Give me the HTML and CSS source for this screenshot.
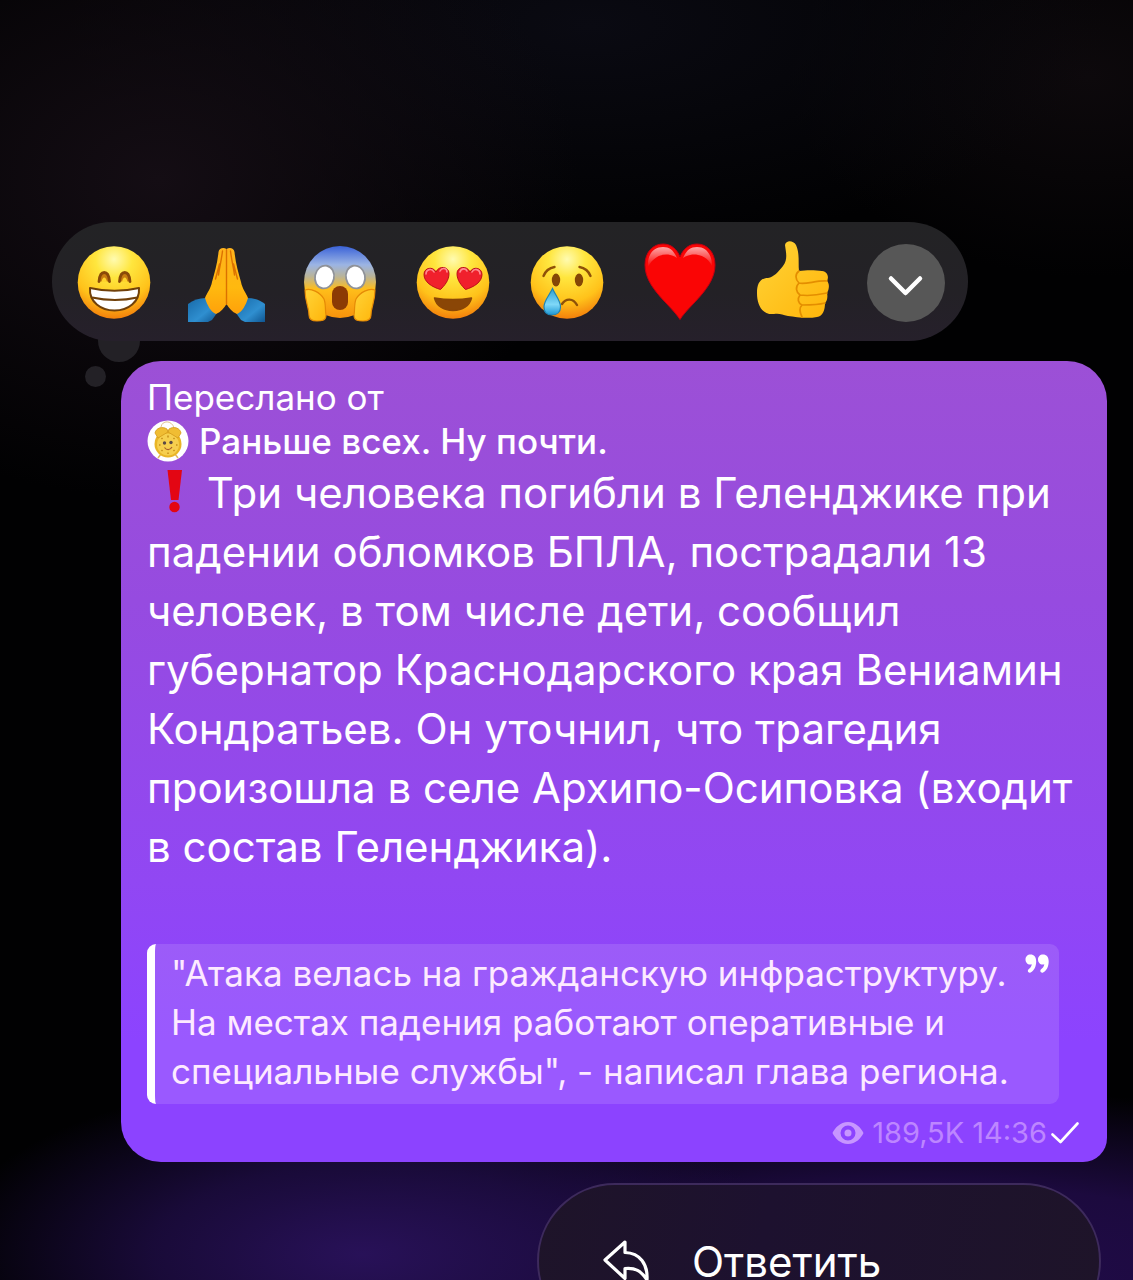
FILE: index.html
```html
<!DOCTYPE html>
<html lang="ru">
<head>
<meta charset="utf-8">
<meta name="viewport" content="width=device-width, initial-scale=1">
<title>Сообщение</title>
<link rel="stylesheet" href="styles.css">
</head>
<body>
<svg class="defs" aria-hidden="true">
  <defs>
    <radialGradient id="face" cx=".5" cy=".18" r=".84">
      <stop offset="0" stop-color="#fffbb0"/><stop offset=".3" stop-color="#ffe63e"/><stop offset=".7" stop-color="#ffc21a"/><stop offset="1" stop-color="#f27a0a"/>
    </radialGradient>
    <linearGradient id="fear" x1="0" y1="0" x2="0" y2="1">
      <stop offset="0" stop-color="#3a62d8"/><stop offset=".26" stop-color="#9bb4e4"/><stop offset=".42" stop-color="#b9b49a"/><stop offset=".6" stop-color="#ffbe1a"/><stop offset="1" stop-color="#f7920c"/>
    </linearGradient>
    <linearGradient id="skin" x1="0" y1="0" x2="0" y2="1">
      <stop offset="0" stop-color="#ffb31c"/><stop offset=".6" stop-color="#ffb90f"/><stop offset="1" stop-color="#ffa10a"/>
    </linearGradient>
    <linearGradient id="palm" x1="0" y1="0" x2="1" y2="1">
      <stop offset="0" stop-color="#ffd438"/><stop offset="1" stop-color="#ffb50a"/>
    </linearGradient>
    <linearGradient id="sleeve" x1="0" y1="0" x2="1" y2="1">
      <stop offset="0" stop-color="#1769a8"/><stop offset=".6" stop-color="#2f8fd0"/><stop offset="1" stop-color="#0f5590"/>
    </linearGradient>
    <linearGradient id="tear" x1="0" y1="0" x2="0" y2="1">
      <stop offset="0" stop-color="#2f9fd0"/><stop offset=".6" stop-color="#7fd8f8"/><stop offset="1" stop-color="#1c96d2"/>
    </linearGradient>
    <linearGradient id="gloss" x1="0" y1="0" x2="0" y2="1">
      <stop offset="0" stop-color="#fff" stop-opacity=".65"/><stop offset="1" stop-color="#fff" stop-opacity="0"/>
    </linearGradient>
  </defs>
</svg>
<main class="screen">
  <div class="reactions">
    <button class="reaction" type="button" aria-label="Улыбка">
      <svg viewBox="0 0 80 80"><circle cx="40" cy="39.500" r="36.300" fill="url(#face)"/>
        <path d="M25 38.500c1-12 9.500-12 10.500 0M45.500 38.500c1-12 9.500-12 10.500 0" fill="#c77c10" stroke="#8a4a08" stroke-width="2.800" stroke-linecap="round"/>
        <path d="M27.500 39c1-6 4.500-6 5.500 0zM48 39c1-6 4.500-6 5.500 0z" fill="#ffd42c"/>
        <path d="M16 45c15 3.500 34 3.500 49 0 1 14-11 22.500-24.500 22.500S15 59 16 45z" fill="#fff" stroke="#70400a" stroke-width="2" stroke-linejoin="round"/>
        <path d="M18 54.500c14 3 32 3 45.500 0" fill="none" stroke="#70400a" stroke-width="2"/>
      </svg>
    </button>
    <button class="reaction" type="button" aria-label="Сложенные руки">
      <svg viewBox="0 0 80 80">
        <path d="M1 61c5-4 11-6 18-6l11 15-5 7-4 2H1z" fill="url(#sleeve)"/><path d="M78 61c-5-4-11-6-18-6L49 70l5 7 4 2h20z" fill="url(#sleeve)"/>
        <path d="M39.500 6c-3-2-7.500-1-8 3-1 11-4 21-6.500 30-1 6-5 11-7 16 2 7 6 14 11 16 5-2 8-6 10.500-10z" fill="url(#skin)"/>
        <path d="M39.500 6c3-2 7.500-1 8 3 1 11 4 21 6.500 30 1 6 5 11 7 16-2 7-6 14-11 16-5-2-8-6-10.500-10z" fill="url(#skin)"/>
        <path d="M39.500 7v54M32.500 21l-4 15M35.500 8c-1 9-3 16-4 24M46.500 21l4 15M43.500 8c1 9 3 16 4 24" fill="none" stroke="#dc7100" stroke-width="1.400" stroke-linecap="round"/>
      </svg>
    </button>
    <button class="reaction" type="button" aria-label="Ужас">
      <svg viewBox="0 0 80 80"><circle cx="40" cy="39" r="36" fill="url(#fear)"/>
        <ellipse cx="24.500" cy="34" rx="9.500" ry="11.500" fill="#fff" stroke="#8f9299" stroke-width="1.800" transform="rotate(12 24.500 34)"/>
        <ellipse cx="55.500" cy="34" rx="9.500" ry="11.500" fill="#fff" stroke="#8f9299" stroke-width="1.800" transform="rotate(-12 55.500 34)"/>
        <rect x="32" y="43" width="16" height="24" rx="8" fill="#8c3a04"/>
        <path d="M5 47c6-2 15 2 19 9 2 5 1 11 2 16 0 6-5 6-9 6-6 0-8-2-8-6 0-8-4-13-4-25z" fill="url(#palm)" stroke="#e58a06" stroke-width="1.200"/>
        <path d="M75 47c-6-2-15 2-19 9-2 5-1 11-2 16 0 6 5 6 9 6 6 0 8-2 8-6 0-8 4-13 4-25z" fill="url(#palm)" stroke="#e58a06" stroke-width="1.200"/>
      </svg>
    </button>
    <button class="reaction" type="button" aria-label="Влюблённость">
      <svg viewBox="0 0 80 80"><circle cx="40" cy="39.500" r="36.300" fill="url(#face)"/>
        <path d="M27.500 46.500C19 44 11 39 11 31.500c0-7 9-8.500 12-2.500 3-7 13-5.500 13 1.500 0 7-4.500 12-8.500 16z" fill="#f0202c" stroke="#b90f18" stroke-width="1"/>
        <path d="M52.500 46.500C61 44 69 39 69 31.500c0-7-9-8.500-12-2.500-3-7-13-5.500-13 1.500 0 7 4.500 12 8.500 16z" fill="#f0202c" stroke="#b90f18" stroke-width="1"/>
        <path d="M13 31c0-5 6-6 8-2M27 28c2-4 7-3 7 1M47 29c1-4 6-4 7-1M59 29c2-4 8-3 8 2" fill="none" stroke="#ff8a90" stroke-width="1.600" stroke-linecap="round"/>
        <path d="M21.500 55c12 2 25 2 37 0-2 8-9 12.500-18.500 12.500S23.500 63 21.500 55z" fill="#8a4606" stroke="#8a4606" stroke-width="1.500" stroke-linejoin="round"/>
      </svg>
    </button>
    <button class="reaction" type="button" aria-label="Слеза">
      <svg viewBox="0 0 80 80"><circle cx="40" cy="39.500" r="36.300" fill="url(#face)"/>
        <path d="M16.500 33c2-5 5-8 11-9M63.500 33c-2-5-5-8-11-9M35 61c4-6 11-6 15 1" fill="none" stroke="#8f5108" stroke-width="2.400" stroke-linecap="round"/>
        <ellipse cx="29" cy="37" rx="4.200" ry="6.500" fill="#854706"/><ellipse cx="52" cy="37" rx="4.200" ry="6.500" fill="#854706"/>
        <path d="M25.500 45.500c3 7 8 12 8 18.500 0 5-3.500 8-8.500 8s-8-3-8-8c0-6.500 5-11 8.500-18.500z" fill="url(#tear)" stroke="#1f84b4" stroke-width="1.200"/>
      </svg>
    </button>
    <button class="reaction" type="button" aria-label="Сердце">
      <svg viewBox="0 0 80 80"><path d="M40 76.500C31 62 5 45 5 22 5 8 14 1 23 1c8 0 14 5 17 13C43 6 49 1 57 1c10 0 18 8 18 21 0 23-26 40-35 54.500z" fill="#fa0505" stroke="#c30010" stroke-width="1"/>
        <path d="M8 24C7 11 14 4 23 4c7 0 11 4 14 11-8-6-22-5-29 9zM43 15c3-7 7-11 14-11 9 0 15 7 15 19-6-13-21-14-29-8z" fill="url(#gloss)"/>
      </svg>
    </button>
    <button class="reaction" type="button" aria-label="Нравится">
      <svg viewBox="0 0 80 80"><path d="M32 2c1-5 8-5 11 0 4 9 2 18 3 26 7-1 16-1 23 0 6 1 7 6 5 10 3 3 2 9 0 12 1 4 0 8-2 10 0 7-2 13-8 14-10 2-21 0-29-1-6-1-8-3-14-2C9 72 4 62 4 50c0-9 3-15 11-15 6-1 10-6 15-12 5-7 3-13 2-21z" fill="url(#palm)"/>
        <path d="M46 28c-4 3-4 8 0 12 6 2 18-3 28-2M46 40c-4 4-3 9 1 12 7 1 18 0 27-2M47 52c-3 4-2 8 2 10 6 0 16 0 23-2M49 62c-3 3-2 8 0 12" fill="none" stroke="#e48e00" stroke-width="1.700" stroke-linecap="round"/>
      </svg>
    </button>
    <button class="more" type="button" aria-label="Ещё реакции">
      <svg viewBox="0 0 78 78"><path d="M24 34.500l14.500 14.500L53 34.500" fill="none" stroke="#fff" stroke-width="4.500" stroke-linecap="round" stroke-linejoin="round"/></svg>
    </button>
  </div>

  <article class="bubble">
    <header class="forward">
      <p>Переслано от</p>
      <a class="source" href="#channel">
        <svg class="avatar" viewBox="0 0 42 42"><circle cx="21" cy="21" r="20.500" fill="#fff"/>
          <path d="M14 7c1-7 11-7 13 1" fill="none" stroke="#e2c391" stroke-width="1"/>
          <path d="M14 34l-3 4M28 34l3 4" stroke="#e0b860" stroke-width="1.500"/>
          <circle cx="21" cy="24" r="13.500" fill="#e9b526"/><circle cx="21" cy="24.500" r="11" fill="#f6cf4e"/>
          <path d="M8 13c1-5 7-7 12-4l1 3-10 6zM34 13c-1-5-7-7-12-4l-1 3 10 6z" fill="#f0bd33" stroke="#d49a1c" stroke-width=".8"/>
          <circle cx="17.500" cy="23" r="1.700" fill="#5b4a46"/><circle cx="24" cy="22.500" r="1.700" fill="#5b4a46"/>
          <path d="M17.500 27.500c2 3 5.500 3 7.500-.5" fill="none" stroke="#a9602a" stroke-width="1.200"/>
          <path d="M21 15.500v2M12 25h1.500M29 25h1.500M14.500 18l1 1M27.500 18l-1 1M14.500 31l1-1M27.500 31l-1-1M21 32.500v1.500" stroke="#c58d18" stroke-width="1.500"/>
        </svg>
        <span>Раньше всех. Ну почти.</span>
      </a>
    </header>
    <p class="message"><svg class="alert" viewBox="0 0 48 44" role="img" aria-label="Важно"><path d="M20.500 1H35l-3.500 30H24z" fill="#e30613"/><circle cx="27.500" cy="38" r="5.200" fill="#e30613"/></svg> Три человека погибли в Геленджике при<br>падении обломков БПЛА, пострадали 13<br>человек, в том числе дети, сообщил<br>губернатор Краснодарского края Вениамин<br>Кондратьев. Он уточнил, что трагедия<br>произошла в селе Архипо-Осиповка (входит<br>в состав Геленджика).</p>
    <blockquote class="quote">
      <p>"Атака велась на гражданскую инфраструктуру.<br>На местах падения работают оперативные и<br>специальные службы", - написал глава региона.</p>
      <svg class="quote-mark" viewBox="0 0 24 20"><path id="comma" d="M5.500 0.500C2.500.500.500 2.600.500 5.500s2 5 4.500 5c.7 0 1.300-.1 1.800-.3-.3 2.200-1.600 3.800-3.200 5.100-1.700 1.400-.2 4.300 2 3.200 3.500-1.800 5.600-6 5.600-11C11.200 3 9 .500 5.500.500z" fill="#fff"/><use href="#comma" x="12.500"/></svg>
    </blockquote>
    <footer class="meta">
      <svg class="eye" viewBox="0 0 32 22"><path fill-rule="evenodd" d="M16 0C8 0 3 6 .5 11 3 16 8 22 16 22s13-6 15.500-11C29 6 24 0 16 0zm0 3.500a7.500 7.500 0 1 1 0 15 7.500 7.500 0 0 1 0-15z" fill="#c796ff"/><circle cx="16" cy="11" r="3.500" fill="#c796ff"/></svg>
      <span class="views">189,5K</span>
      <span class="sent"><time>14:36</time>
      <svg class="check" viewBox="0 0 28 22"><path d="M1.500 12.500l8 7.500L26.500 1.500" fill="none" stroke="#fff" stroke-width="2.600" stroke-linecap="round" stroke-linejoin="round"/></svg></span>
    </footer>
  </article>

  <nav class="menu">
    <button class="menu-item" type="button">
      <svg class="reply" viewBox="0 0 46 42"><path d="M22 2L2 20 22 38.500V28.500c10-1 16 2 22 11.500C45 24 37 13 22 12.500z" fill="none" stroke="#fff" stroke-width="3.200" stroke-linejoin="round"/></svg>
      <span>Ответить</span>
    </button>
  </nav>
</main>
</body>
</html>
```
FILE: styles.css
```css
* { box-sizing: border-box; }

body {
  margin: 0;
  background: #010102;
  color: #fff;
  font-family: Inter, "Liberation Sans", sans-serif;
}

p, blockquote { margin: 0; }

button {
  padding: 0;
  border: 0;
  background: none;
  color: inherit;
  font: inherit;
}

svg { display: block; }

.defs {
  position: absolute;
  width: 0;
  height: 0;
}

.screen {
  position: relative;
  z-index: 0;
  display: flex;
  flex-direction: column;
  height: 100vh;
  padding-top: 222px;
  overflow: hidden;
  background:
    radial-gradient(ellipse 420px 180px at 32% 98%, #281158 0%, rgba(31, 13, 70, 0.8) 50%, transparent 100%),
    radial-gradient(ellipse 700px 190px at 82% 100%, #210b4a 0%, #1c0a3e 50%, transparent 100%),
    radial-gradient(ellipse 420px 320px at 14% 14%, #140d14 0%, transparent 100%),
    radial-gradient(ellipse 520px 220px at 52% 2%, #0a0a12 0%, transparent 100%),
    radial-gradient(ellipse 300px 200px at 96% 6%, #0d090c 0%, transparent 100%),
    #010102;
}

.reactions {
  position: relative;
  display: grid;
  grid-template-columns: repeat(8, 1fr);
  flex: none;
  place-items: center;
  height: 119px;
  margin: 0 165px 0 52px;
  padding: 2px 5px 0;
  border-radius: 60px;
  background: linear-gradient(#232325, #232126 60%, #26202b);
}

/* the two dots of the tail that leads to the bubble */
.reactions::before,
.reactions::after {
  content: "";
  position: absolute;
  border-radius: 50%;
  background: #232126;
}

.reactions::before {
  z-index: -1;
  left: 46px;
  bottom: -21px;
  width: 42px;
  height: 42px;
}

.reactions::after {
  left: 33px;
  bottom: -46px;
  width: 21px;
  height: 21px;
}

.reaction svg {
  width: 80px;
  height: 80px;
  overflow: visible;
}

.more {
  width: 78px;
  height: 78px;
  border-radius: 50%;
  background: #575757;
}

.bubble {
  flex: none;
  margin: 20px 26px 0 121px;
  padding: 14px 26px 12px;
  border-radius: 40px 40px 24px 40px;
  background: linear-gradient(#9c50d6, #964be0 30%, #9147f3 65%, #8c43ff 85%, #8c43ff);
}

.forward {
  font-size: 35px;
  line-height: 44px;
}

.source {
  display: flex;
  align-items: center;
  gap: 10px;
  color: inherit;
  font-weight: 500;
  text-decoration: none;
}

.avatar {
  width: 42px;
  height: 42px;
}

.message {
  font-size: 42px;
  line-height: 59px;
  white-space: nowrap;
}

.alert {
  display: inline-block;
  width: 48px;
  height: 44px;
  vertical-align: -5px;
}

.quote {
  display: flex;
  justify-content: space-between;
  margin: 68px 22px 0 0;
  padding: 5px 10px 8px 16px;
  border-left: 8px solid #fff;
  border-radius: 9px;
  background: rgba(255, 255, 255, 0.12);
  color: #fdeaff;
  font-size: 35px;
  line-height: 49px;
  white-space: nowrap;
}

.quote-mark {
  width: 24px;
  height: 20px;
  margin-top: 5px;
}

.meta {
  display: flex;
  align-items: center;
  justify-content: flex-end;
  gap: 8px;
  margin-top: 12px;
  padding-right: 2px;
  color: #bd86ff;
  font-size: 29px;
  line-height: 34px;
}

.sent {
  display: flex;
  align-items: center;
  gap: 4px;
}

.eye {
  width: 32px;
  height: 22px;
}

.check {
  width: 28px;
  height: 22px;
}

.menu {
  flex: none;
  margin: 21px 32px 0 537px;
  padding: 34px 64px;
  border: 2px solid #3d2a5c;
  border-radius: 84px;
  background: linear-gradient(100deg, #1e1429, #1d112f 40%, #1e1429);
}

.menu-item {
  display: flex;
  align-items: center;
  gap: 43px;
  width: 100%;
  height: 84px;
  font-size: 42px;
}

.reply {
  width: 46px;
  height: 42px;
}
```
